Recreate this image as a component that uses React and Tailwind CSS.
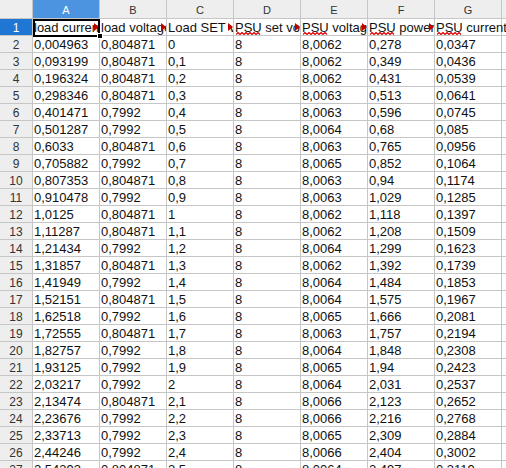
import React from 'react';

const COLS = ['A', 'B', 'C', 'D', 'E', 'F', 'G'];

const HEAD = [
  { t: 'load current', clip: true },
  { t: 'load voltage', clip: true },
  { t: 'Load SET value', clip: true },
  { t: 'PSU set voltage', clip: true, psu: true },
  { t: 'PSU voltage', clip: true, psu: true },
  { t: 'PSU power', clip: true, psu: true },
  { t: 'PSU current', clip: false, psu: true },
];

const ROWS = [
  ['0,004963', '0,804871', '0', '8', '8,0062', '0,278', '0,0347'],
  ['0,093199', '0,804871', '0,1', '8', '8,0062', '0,349', '0,0436'],
  ['0,196324', '0,804871', '0,2', '8', '8,0062', '0,431', '0,0539'],
  ['0,298346', '0,804871', '0,3', '8', '8,0063', '0,513', '0,0641'],
  ['0,401471', '0,7992', '0,4', '8', '8,0063', '0,596', '0,0745'],
  ['0,501287', '0,7992', '0,5', '8', '8,0064', '0,68', '0,085'],
  ['0,6033', '0,804871', '0,6', '8', '8,0063', '0,765', '0,0956'],
  ['0,705882', '0,7992', '0,7', '8', '8,0065', '0,852', '0,1064'],
  ['0,807353', '0,804871', '0,8', '8', '8,0063', '0,94', '0,1174'],
  ['0,910478', '0,7992', '0,9', '8', '8,0063', '1,029', '0,1285'],
  ['1,0125', '0,804871', '1', '8', '8,0062', '1,118', '0,1397'],
  ['1,11287', '0,804871', '1,1', '8', '8,0062', '1,208', '0,1509'],
  ['1,21434', '0,7992', '1,2', '8', '8,0064', '1,299', '0,1623'],
  ['1,31857', '0,804871', '1,3', '8', '8,0062', '1,392', '0,1739'],
  ['1,41949', '0,7992', '1,4', '8', '8,0064', '1,484', '0,1853'],
  ['1,52151', '0,804871', '1,5', '8', '8,0064', '1,575', '0,1967'],
  ['1,62518', '0,7992', '1,6', '8', '8,0065', '1,666', '0,2081'],
  ['1,72555', '0,804871', '1,7', '8', '8,0063', '1,757', '0,2194'],
  ['1,82757', '0,7992', '1,8', '8', '8,0064', '1,848', '0,2308'],
  ['1,93125', '0,7992', '1,9', '8', '8,0065', '1,94', '0,2423'],
  ['2,03217', '0,7992', '2', '8', '8,0064', '2,031', '0,2537'],
  ['2,13474', '0,804871', '2,1', '8', '8,0066', '2,123', '0,2652'],
  ['2,23676', '0,7992', '2,2', '8', '8,0066', '2,216', '0,2768'],
  ['2,33713', '0,7992', '2,3', '8', '8,0065', '2,309', '0,2884'],
  ['2,44246', '0,7992', '2,4', '8', '8,0066', '2,404', '0,3002'],
  ['2,54393', '0,804871', '2,5', '8', '8,0064', '2,497', '0,3119'],
];

// spell-check squiggle under "PSU"
function Squiggle() {
  return (
    <svg
      className="pointer-events-none absolute left-[2px] top-[13px] z-10"
      width="25"
      height="3"
      viewBox="0 0 25 3"
    >
      <path
        d="M0 2.5 L2 0.5 L4 2.5 L6 0.5 L8 2.5 L10 0.5 L12 2.5 L14 0.5 L16 2.5 L18 0.5 L20 2.5 L22 0.5 L24 2.5"
        fill="none"
        stroke="#e00000"
        strokeWidth="1.2"
      />
    </svg>
  );
}

export default function App() {
  return (
    <div className="h-[468px] w-[506px] overflow-hidden bg-white font-['Liberation_Sans',Arial,sans-serif] text-[#111]">
      <div className="relative grid grid-cols-[33px_repeat(7,67px)_1fr]">
        {/* column headers */}
        <div className="h-[19px] border-r border-b border-[#c6c6c6] bg-[#eeeeee]" />
        {COLS.map((c) => (
          <div
            key={c}
            className={`h-[19px] overflow-hidden border-r border-b border-[#c6c6c6] pt-[2px] text-center text-[11px] leading-[17px] ${
              c === 'A' ? 'bg-[#4d94e0] text-white' : 'bg-[#eeeeee] text-[#333]'
            }`}
          >
            {c}
          </div>
        ))}
        <div className="h-[19px] border-b border-[#c6c6c6] bg-[#eeeeee]" />

        {/* row 1 */}
        <div className="h-[17px] border-r border-b border-[#c6c6c6] bg-[#1f76d3] pt-[1px] text-center text-[12px] leading-[16px] text-white">
          1
        </div>
        {HEAD.map((h, i) => (
          <div
            key={i}
            className={`relative h-[17px] whitespace-nowrap border-r border-b border-[#c6c6c6] pt-[1px] pl-[1px] text-[13px] leading-[16px] ${
              h.clip ? 'overflow-hidden' : 'z-10 overflow-visible'
            }`}
          >
            {h.t}
            {h.psu && <Squiggle />}
            {h.clip && (
              <span className="absolute top-[4px] right-0 h-0 w-0 border-y-[4px] border-l-[5px] border-y-transparent border-l-[#c00000]" />
            )}
          </div>
        ))}
        <div className="h-[17px] border-b border-[#c6c6c6]" />

        {/* data rows */}
        {ROWS.map((r, ri) => (
          <React.Fragment key={ri}>
            <div className="h-[17px] border-r border-b border-[#c6c6c6] bg-[#eeeeee] pt-[1px] text-center text-[12px] leading-[16px] text-[#333]">
              {ri + 2}
            </div>
            {r.map((v, ci) => (
              <div
                key={ci}
                className="h-[17px] overflow-hidden whitespace-nowrap border-r border-b border-[#c6c6c6] pt-[1px] pl-[1px] text-[13px] leading-[16px]"
              >
                {v}
              </div>
            ))}
            <div className="h-[17px] border-b border-[#c6c6c6]" />
          </React.Fragment>
        ))}

        {/* active cell cursor */}
        <div className="pointer-events-none absolute top-[19px] left-[33px] h-[18px] w-[67px] border-2 border-black" />
        <div className="pointer-events-none absolute top-[33px] left-[97px] h-[6px] w-[6px] border border-white bg-black" />
      </div>
    </div>
  );
}
